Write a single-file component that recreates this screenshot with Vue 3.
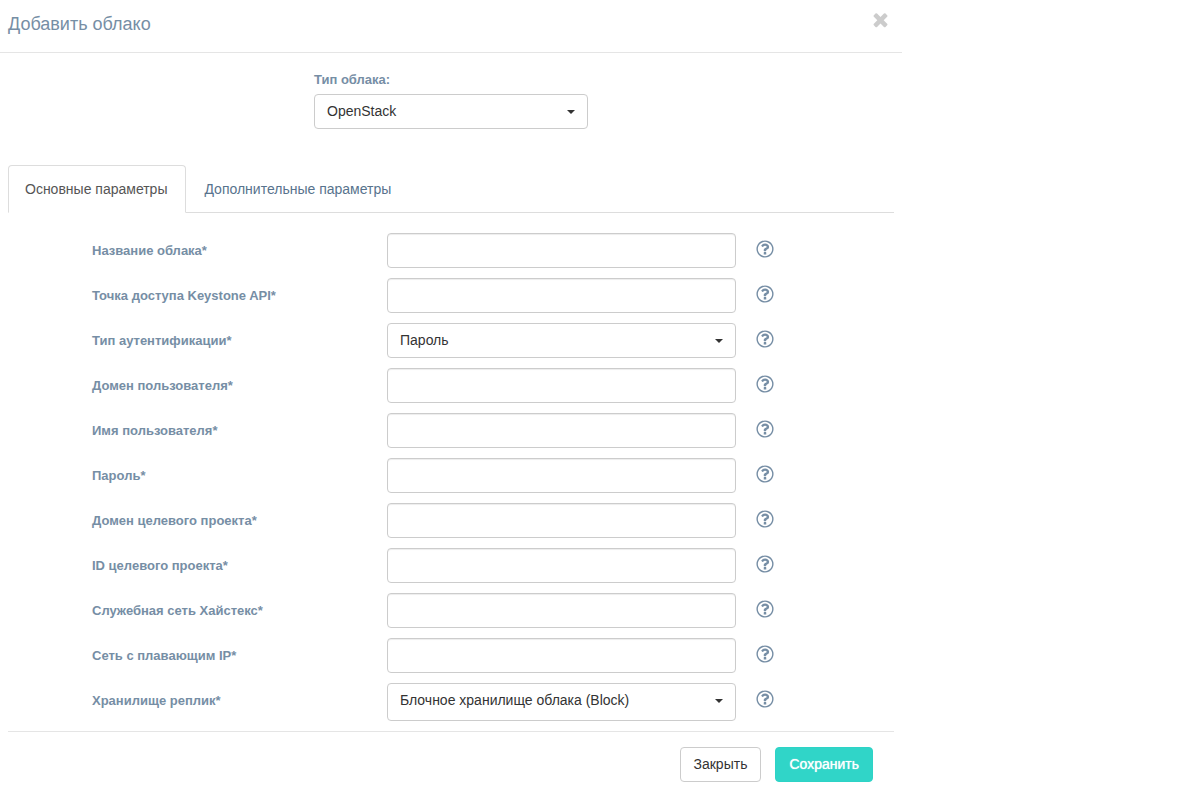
<script setup>
import { reactive, ref } from 'vue'

const cloudType = ref('OpenStack')
const activeTab = ref('main')

const tabs = [
  { id: 'main', title: 'Основные параметры' },
  { id: 'extra', title: 'Дополнительные параметры' },
]

const fields = [
  { id: 'name', label: 'Название облака' },
  { id: 'keystone', label: 'Точка доступа Keystone API' },
  { id: 'auth', label: 'Тип аутентификации', options: ['Пароль'] },
  { id: 'user-domain', label: 'Домен пользователя' },
  { id: 'user-name', label: 'Имя пользователя' },
  { id: 'password', label: 'Пароль', type: 'password' },
  { id: 'project-domain', label: 'Домен целевого проекта' },
  { id: 'project-id', label: 'ID целевого проекта' },
  { id: 'service-network', label: 'Служебная сеть Хайстекс' },
  { id: 'floating-network', label: 'Сеть с плавающим IP' },
  { id: 'storage', label: 'Хранилище реплик', options: ['Блочное хранилище облака (Block)'], tall: true },
]

const values = reactive(
  Object.fromEntries(fields.map((f) => [f.id, f.options ? f.options[0] : '']))
)
</script>

<template>
  <main class="dialog">
    <header class="header">
      <h1 class="title">Добавить облако</h1>
      <button class="close" type="button" aria-label="Закрыть окно">
        <svg class="close-icon" viewBox="0 0 1792 1792" aria-hidden="true">
          <path d="M1490 1322q0 40-28 68l-136 136q-28 28-68 28t-68-28l-294-294-294 294q-28 28-68 28t-68-28l-136-136q-28-28-28-68t28-68l294-294-294-294q-28-28-28-68t28-68l136-136q28-28 68-28t68 28l294 294 294-294q28-28 68-28t68 28l136 136q28 28 28 68t-28 68l-294 294 294 294q28 28 28 68z" />
        </svg>
      </button>
    </header>

    <form class="body" @submit.prevent>
      <div class="type">
        <label class="label" for="cloud-type">Тип облака:</label>
        <div class="select-wrap">
          <select id="cloud-type" v-model="cloudType" class="control select">
            <option>OpenStack</option>
          </select>
          <span class="caret"></span>
        </div>
      </div>

      <nav class="tabs" role="tablist">
        <button
          v-for="tab in tabs"
          :key="tab.id"
          type="button"
          role="tab"
          class="tab"
          :class="{ active: activeTab === tab.id }"
          :aria-selected="activeTab === tab.id"
          @click="activeTab = tab.id"
        >{{ tab.title }}</button>
      </nav>

      <div class="fields">
        <div v-for="field in fields" :key="field.id" class="row">
          <label class="label" :for="field.id">{{ field.label }}*</label>
          <div v-if="field.options" class="select-wrap">
            <select :id="field.id" v-model="values[field.id]" class="control select" :class="{ tall: field.tall }">
              <option v-for="option in field.options" :key="option">{{ option }}</option>
            </select>
            <span class="caret"></span>
          </div>
          <input v-else :id="field.id" v-model="values[field.id]" class="control" :type="field.type || 'text'" />
          <button class="help" type="button" :aria-label="'Справка: ' + field.label">
            <svg class="help-icon" viewBox="0 0 1792 1792" aria-hidden="true">
              <path d="M1008 1200v160q0 14-9 23t-23 9h-160q-14 0-23-9t-9-23v-160q0-14 9-23t23-9h160q14 0 23 9t9 23zm256-496q0 50-15 90t-45.5 69-52 44-59.5 36q-32 18-46.5 28t-26 24-11.5 29v32q0 14-9 23t-23 9h-160q-14 0-23-9t-9-23v-68q0-35 10.500-64.500t24-47.500 39-35.500 41-25.500 44.500-21q53-25 75-43t22-49q0-42-43.500-71.500t-95.500-29.500q-56 0-95 27-29 20-80 83-9 12-25 12-11 0-19-6l-108-82q-10-7-12-20t5-23q122-192 349-192 129 0 238.500 89.500t109.500 214.500zm-368-448q-130 0-248.500 51t-204 136.500-136.500 204-51 248.500 51 248.500 136.500 204 204 136.500 248.500 51 248.500-51 204-136.500 136.500-204 51-248.500-51-248.500-136.500-204-204-136.500-248.500-51zm768 640q0 209-103 385.500t-279.500 279.500-385.500 103-385.500-103-279.500-279.500-103-385.500 103-385.500 279.500-279.500 385.500-103 385.500 103 279.500 279.500 103 385.500z" />
            </svg>
          </button>
        </div>
      </div>

      <footer class="footer">
        <button class="btn" type="button">Закрыть</button>
        <button class="btn primary" type="submit">Сохранить</button>
      </footer>
    </form>
  </main>
</template>

<style>
body {
  background: #fff;
}
</style>

<style scoped>
.dialog,
.dialog * {
  box-sizing: border-box;
}

.dialog {
  max-width: 902px;
  font-family: "Liberation Sans", Arial, sans-serif;
  font-size: 14px;
  line-height: 20px;
  color: #333;
}

button,
input,
select {
  margin: 0;
  font: inherit;
  color: inherit;
}

button {
  cursor: pointer;
}

.header {
  display: flex;
  align-items: flex-start;
  justify-content: space-between;
  padding: 9px 11px 15px 8px;
  border-bottom: 1px solid #e5e5e5;
}

.title {
  margin: 0;
  padding-top: 2px;
  font-size: 18px;
  line-height: 26px;
  font-weight: 400;
  color: #768ea5;
}

.close {
  display: flex;
  padding: 0;
  border: 0;
  background: none;
}

.close-icon {
  width: 21px;
  height: 21px;
  fill: #ccc;
}

.body {
  padding: 17px 8px;
}

.type {
  width: 274px;
  margin: 0 auto 36px;
}

.label {
  display: block;
  font-size: 13px;
  font-weight: 700;
  color: #768ea5;
}

.type .label {
  margin-bottom: 4px;
}

.select-wrap {
  position: relative;
}

.control {
  display: block;
  width: 100%;
  height: 35px;
  padding: 5px 12px 7px;
  border: 1px solid #ccc;
  border-radius: 4px;
  background: #fff;
  box-shadow: inset 0 1px 1px rgba(0, 0, 0, 0.075);
}

.select {
  appearance: none;
  box-shadow: none;
}

.tall {
  height: 38px;
  padding-bottom: 10px;
}

.caret {
  position: absolute;
  top: 16px;
  right: 13px;
  border: 4px solid transparent;
  border-top-color: #333;
  border-bottom: 0;
  pointer-events: none;
}

.tabs {
  display: flex;
  gap: 1px;
  border-bottom: 1px solid #ddd;
}

.tab {
  height: 48px;
  margin-bottom: -1px;
  padding: 0 18px 0 16px;
  border: 1px solid transparent;
  border-radius: 4px 4px 0 0;
  background: none;
  color: #58738d;
}

.active {
  border-color: #ddd;
  border-bottom-color: #fff;
  background: #fff;
  color: #555;
}

.fields {
  display: grid;
  gap: 10px;
  padding: 20px 84px 10px;
}

.row {
  display: grid;
  grid-template-columns: 295fr 349fr 74fr;
}

.row > .label {
  padding-top: 8px;
}

.help {
  display: flex;
  align-self: start;
  justify-self: start;
  margin: 6px 0 0 19px;
  padding: 0;
  border: 0;
  background: none;
}

.help-icon {
  width: 20px;
  height: 20px;
  fill: #768ea5;
}

.footer {
  display: flex;
  justify-content: flex-end;
  gap: 14px;
  padding: 15px 21px 0;
  border-top: 1px solid #e5e5e5;
}

.btn {
  height: 35px;
  padding: 0 13px 2px;
  border: 1px solid #ccc;
  border-radius: 4px;
  background: #fff;
}

.primary {
  border-color: #2ed3c6;
  background: #30d5c8;
  color: #fff;
  text-shadow: 0 0 1px #fff;
}
</style>
